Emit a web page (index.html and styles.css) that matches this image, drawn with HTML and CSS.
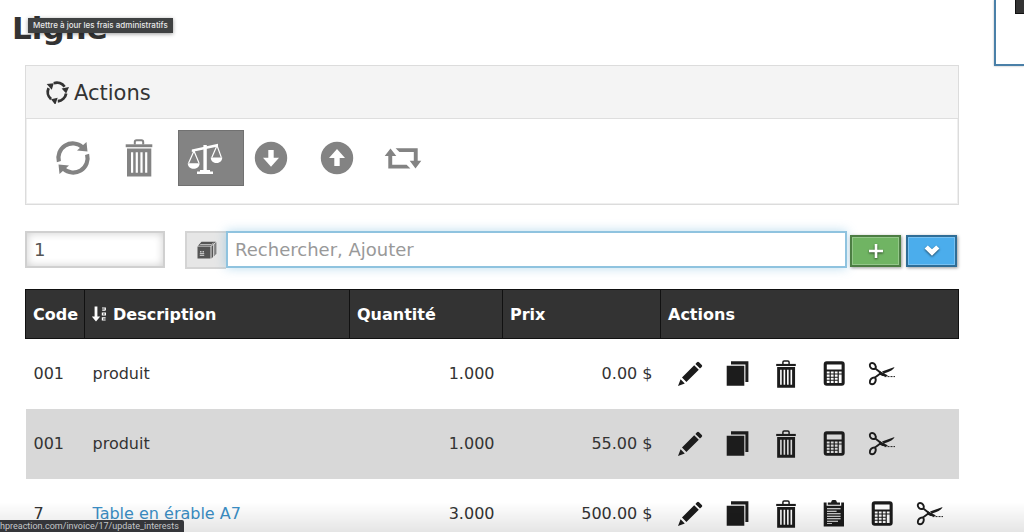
FILE: index.html
```html
<!DOCTYPE html>
<html lang="fr">
<head>
    <meta charset="UTF-8">
    <meta name="viewport" content="width=device-width, initial-scale=1.0">
    <title>Ligne</title>
    <link rel="stylesheet" href="styles.css">
</head>
<body>
    <svg class="sprite" aria-hidden="true">
        <symbol id="i-cycle" viewBox="0 0 24 24">
            <g id="cycle-part">
                <path d="M8.8 3.3A9.3 9.3 0 0 1 19.6 6.7" fill="none" stroke="currentColor" stroke-width="2.8"/>
                <path d="M16.6 8.6L24 7L21.2 13.6Z"/>
            </g>
            <use href="#cycle-part" transform="rotate(120 12 12)"/>
            <use href="#cycle-part" transform="rotate(240 12 12)"/>
        </symbol>
        <symbol id="i-refresh" viewBox="0 0 38 38">
            <g id="refresh-part">
                <path d="M4.9 22.6A14.4 14.4 0 0 1 28.5 8.2" fill="none" stroke="currentColor" stroke-width="4.2"/>
                <path d="M32.5 3L33.5 12.5L23 11.4Z"/>
            </g>
            <use href="#refresh-part" transform="rotate(180 19 19)"/>
        </symbol>
        <symbol id="i-trash" viewBox="0 0 38 38">
            <path d="M14.8 5.5V3Q14.8 1.3 16.5 1.3H21.5Q23.2 1.3 23.2 3V5.5" fill="none" stroke="currentColor" stroke-width="2"/>
            <path d="M5.7 5.3H32.3V8.2H5.7Z"/>
            <path fill-rule="evenodd" d="M7 9.6H31.3V37.6H7ZM11 13.3V33.7H13.2V13.3ZM15.7 13.3V33.7H17.9V13.3ZM20.4 13.3V33.7H22.6V13.3ZM25.1 13.3V33.7H27.3V13.3Z"/>
        </symbol>
        <symbol id="i-scale" viewBox="0 0 38 38">
            <path d="M5.8 10.6L32 4.8V7.4L5.8 13Z"/>
            <path d="M17.4 6H20.8V31H24V32.4H27V35H11V32.4H14V31H17.4Z"/>
            <path d="M8 12L2.6 24M8 12L13 24M31 6.5L25.8 18.6M31 6.5L35.4 18.6" fill="none" stroke="currentColor" stroke-width="1.2"/>
            <path d="M1.7 24.2H13.7C13.3 31.6 2.1 31.6 1.7 24.2ZM24.7 18.5H36.3C35.9 25.9 25.1 25.9 24.7 18.5Z"/>
        </symbol>
        <symbol id="i-down" viewBox="0 0 38 38">
            <path fill-rule="evenodd" d="M19 2.8A16.2 16.2 0 1 1 19 35.2A16.2 16.2 0 1 1 19 2.8ZM16.3 11V18.7H11L19 27.7L27 18.7H21.7V11Z"/>
        </symbol>
        <symbol id="i-up" viewBox="0 0 38 38">
            <path fill-rule="evenodd" d="M19 2.8A16.2 16.2 0 1 1 19 35.2A16.2 16.2 0 1 1 19 2.8ZM16.3 27V19H11L19 10L27 19H21.7V27Z"/>
        </symbol>
        <symbol id="i-repeat" viewBox="0 0 38 38">
            <path id="repeat-part" d="M.7 17L6.5 9.4L12.3 17H8.2V25.8H22.6L26.4 29.6H4.3V17Z"/>
            <use href="#repeat-part" transform="rotate(180 19 19.4)"/>
        </symbol>
        <symbol id="i-box" viewBox="0 0 20 18">
            <path fill-rule="evenodd" d="M.5 5.6H13.5V17.4H.5ZM2.8 12.3V13.2H7.2V12.3ZM2.8 14.2V15.1H7.2V14.2ZM3.2 10V11.6H4.4V10ZM5.6 10V11.6H6.8V10Z"/>
            <path d="M1 4.8L4.5 .8H19L14 4.8ZM14.5 5.4L16 4V16L14.5 17.4ZM16.8 3.4L17.6 2.7V14.6L16.8 15.4ZM18.3 2.1L19.3 1.2V13L18.3 14Z"/>
            <path d="M3.2 3.5H14.5L16.5 2" fill="none" stroke="#e6e6e6" stroke-width=".7"/>
        </symbol>
        <symbol id="i-sort" viewBox="0 0 15 16">
            <path d="M2.6 .6H5.4V10.4H8.2L4 15.4L-.2 10.4H2.6Z"/>
            <path d="M10 2H13.3V4.6M10.2 4.2H13M10.4 7H13.4V9H10.4ZM13.6 11.8H10.4V14H13.6" fill="none" stroke="currentColor" stroke-width="1.2"/>
        </symbol>
        <symbol id="i-plus" viewBox="0 0 16 16">
            <path d="M6.7 1H9.3V6.7H15V9.3H9.3V15H6.7V9.3H1V6.7H6.7Z"/>
        </symbol>
        <symbol id="i-chevron" viewBox="0 0 16 16">
            <path d="M.6 5.4L3.8 2.4L8 6.3L12.2 2.4L15.4 5.4L8 12.8Z"/>
        </symbol>
        <symbol id="i-pencil" viewBox="0 0 28 28">
            <path d="M2 26L4.6 19.2L8.8 23.4ZM6 17.6L18.2 5.2L22.8 9.8L10.4 22ZM19.4 4L21 2.3Q22 1.4 23 2.3L25.8 5.1Q26.7 6.1 25.7 7.1L24 8.6Z"/>
        </symbol>
        <symbol id="i-copy" viewBox="0 0 28 28">
            <path d="M2.7 5.7H20.3V25.7H2.7ZM7 1.3H24.4V22H21.4V4.6H7Z"/>
        </symbol>
        <symbol id="i-calc" viewBox="0 0 28 28">
            <path fill-rule="evenodd" d="M6.7 1.3H21.7Q24.7 1.3 24.7 4.3V22.7Q24.7 25.7 21.7 25.7H6.7Q3.7 25.7 3.7 22.7V4.3Q3.7 1.3 6.7 1.3ZM6.8 4.6V9.6H21.6V4.6ZM6.8 11.4V13.6H9.6V11.4ZM10.8 11.4V13.6H13.6V11.4ZM14.8 11.4V13.6H17.6V11.4ZM18.8 11.4V13.6H21.6V11.4ZM6.8 14.6V16.8H9.6V14.6ZM10.8 14.6V16.8H13.6V14.6ZM14.8 14.6V16.8H17.6V14.6ZM18.8 14.6V22.9H21.6V14.6ZM6.8 17.7V19.8H9.6V17.7ZM10.8 17.7V19.8H13.6V17.7ZM14.8 17.7V19.8H17.6V17.7ZM6.8 20.8V22.9H9.6V20.8ZM10.8 20.8V22.9H13.6V20.8ZM14.8 20.8V22.9H17.6V20.8Z"/>
        </symbol>
        <symbol id="i-cut" viewBox="0 0 28 28">
            <path d="M7.3 8.6C4 10.2 1.6 7.2 1.8 4.8C2.2 2.6 5.4 2.4 7 4.6C8 6 8 7.4 7.3 8.6ZM7 17.6C4 17.2 1.6 19.6 1.9 22.4C2.3 24.9 5.6 24.8 7 22.4C8 20.6 8 18.8 7 17.6ZM7.3 8.6L13 13L7 17.6" fill="none" stroke="currentColor" stroke-width="1.9"/>
            <path d="M10.5 10.6L20 15.6Q16.4 17.4 11.4 14.4ZM14 11.6L26.6 7Q25.4 10.8 16 13.4Z"/>
            <path d="M16.5 16.6H27" fill="none" stroke="currentColor" stroke-width="1" stroke-dasharray="2 1"/>
        </symbol>
        <symbol id="i-clipboard" viewBox="0 0 28 28">
            <path fill-rule="evenodd" d="M3.7 2.6H6.6V5.8H21.2V2.6H24V26.4H3.7ZM7 8.3V9.3H20.6V8.3ZM7 10.8V11.8H16.6V10.8ZM7 13.3V14.3H20.6V13.3ZM7 15.8V16.8H20.6V15.8ZM7 18.3V19.3H20.6V18.3ZM7 20.8V21.8H18V20.8ZM7 23.3V24.1H12V23.3Z"/>
            <path d="M7.8 4.8V2.4H11L11.8 .4Q14 -.8 16.2 .4L17 2.4H20V4.8Z"/>
        </symbol>
    </svg>

    <div class="page">
        <main class="content">
            <h1>Ligne</h1>

            <section class="panel">
                <h2 class="panel-title"><svg class="icon-title"><use href="#i-cycle"/></svg>Actions</h2>
                <div class="toolbar">
                    <button type="button" class="tool" aria-label="Actualiser"><svg><use href="#i-refresh"/></svg></button>
                    <button type="button" class="tool" aria-label="Supprimer"><svg><use href="#i-trash"/></svg></button>
                    <button type="button" class="tool active" aria-describedby="tip" aria-label="Frais administratifs"><svg><use href="#i-scale"/></svg></button>
                    <button type="button" class="tool" aria-label="Descendre"><svg><use href="#i-down"/></svg></button>
                    <button type="button" class="tool" aria-label="Monter"><svg><use href="#i-up"/></svg></button>
                    <button type="button" class="tool" aria-label="Convertir"><svg><use href="#i-repeat"/></svg></button>
                </div>
            </section>

            <form class="add-line">
                <input type="text" class="field qty" value="1" aria-label="Quantité">
                <div class="search">
                    <label class="addon" for="product" aria-label="Produit"><svg><use href="#i-box"/></svg></label>
                    <input type="text" class="field product" id="product" placeholder="Rechercher, Ajouter">
                    <button type="button" class="btn green" aria-label="Ajouter"><svg><use href="#i-plus"/></svg></button>
                    <button type="button" class="btn blue" aria-label="Options"><svg><use href="#i-chevron"/></svg></button>
                </div>
            </form>

            <table class="lines">
                <colgroup>
                    <col class="col-code">
                    <col class="col-desc">
                    <col class="col-qty">
                    <col class="col-price">
                    <col>
                </colgroup>
                <thead>
                    <tr>
                        <th>Code</th>
                        <th><svg class="icon-sort"><use href="#i-sort"/></svg>Description</th>
                        <th>Quantité</th>
                        <th>Prix</th>
                        <th>Actions</th>
                    </tr>
                </thead>
                <tbody>
                    <tr>
                        <td>001</td>
                        <td>produit</td>
                        <td class="num">1.000</td>
                        <td class="num">0.00 $</td>
                        <td>
                            <div class="row-actions">
                                <a href="#" aria-label="Modifier"><svg><use href="#i-pencil"/></svg></a>
                                <a href="#" aria-label="Copier"><svg><use href="#i-copy"/></svg></a>
                                <a href="#" aria-label="Supprimer"><svg><use href="#i-trash"/></svg></a>
                                <a href="#" aria-label="Calculer"><svg><use href="#i-calc"/></svg></a>
                                <a href="#" aria-label="Couper"><svg><use href="#i-cut"/></svg></a>
                            </div>
                        </td>
                    </tr>
                    <tr>
                        <td>001</td>
                        <td>produit</td>
                        <td class="num">1.000</td>
                        <td class="num">55.00 $</td>
                        <td>
                            <div class="row-actions">
                                <a href="#" aria-label="Modifier"><svg><use href="#i-pencil"/></svg></a>
                                <a href="#" aria-label="Copier"><svg><use href="#i-copy"/></svg></a>
                                <a href="#" aria-label="Supprimer"><svg><use href="#i-trash"/></svg></a>
                                <a href="#" aria-label="Calculer"><svg><use href="#i-calc"/></svg></a>
                                <a href="#" aria-label="Couper"><svg><use href="#i-cut"/></svg></a>
                            </div>
                        </td>
                    </tr>
                    <tr>
                        <td>7</td>
                        <td><a class="link" href="#">Table en érable A7</a></td>
                        <td class="num">3.000</td>
                        <td class="num">500.00 $</td>
                        <td>
                            <div class="row-actions">
                                <a href="#" aria-label="Modifier"><svg><use href="#i-pencil"/></svg></a>
                                <a href="#" aria-label="Copier"><svg><use href="#i-copy"/></svg></a>
                                <a href="#" aria-label="Supprimer"><svg><use href="#i-trash"/></svg></a>
                                <a href="#" aria-label="Détails"><svg><use href="#i-clipboard"/></svg></a>
                                <a href="#" aria-label="Calculer"><svg><use href="#i-calc"/></svg></a>
                                <a href="#" aria-label="Couper"><svg><use href="#i-cut"/></svg></a>
                            </div>
                        </td>
                    </tr>
                </tbody>
            </table>
        </main>

        <aside class="side">
            <div class="side-bar"></div>
        </aside>
    </div>

    <div class="fade"></div>
    <div class="tooltip" id="tip" role="tooltip">Mettre à jour les frais administratifs</div>
    <div class="status">hpreaction.com/invoice/17/update_interests</div>
</body>
</html>
```
FILE: styles.css
```css
* {
    box-sizing: border-box;
}
body {
    margin: 0;
    height: 100vh;
    overflow: hidden;
    background-color: #fff;
    color: #333;
    font-family: "DejaVu Sans", Verdana, sans-serif;
    font-size: 16px;
}
svg {
    display: block;
    fill: currentColor;
}
.sprite {
    position: absolute;
    width: 0;
    height: 0;
}
.page {
    display: flex;
    align-items: flex-start;
}
.content {
    flex: 1;
    min-width: 0;
    padding: 8px 0 0 25px;
}
h1 {
    margin: 0 0 17px -13px;
    font-size: 31px;
    line-height: 40px;
    color: #333;
}

/* Actions */
.panel {
    border: 1px solid #dcdcdc;
    margin-bottom: 26px;
    box-shadow: inset 0 0 0 1px #efefef;
}
.panel-title {
    display: flex;
    align-items: center;
    gap: 5px;
    height: 53px;
    margin: 0;
    padding: 2px 19px 0;
    background-color: #f4f4f4;
    border-bottom: 1px solid #dedede;
    font-size: 21px;
    font-weight: normal;
}
.icon-title {
    width: 24px;
    height: 24px;
    margin-top: -2px;
}
.toolbar {
    display: flex;
    padding: 11px 20px 18px;
}
.tool {
    width: 66px;
    height: 56px;
    padding: 0 0 0 7px;
    border: 1px solid transparent;
    background: none;
    color: #838383;
    cursor: pointer;
}
.tool svg {
    width: 38px;
    height: 38px;
}
.tool.active {
    background-color: #838383;
    border-color: #717171;
    color: #fff;
}

/* Nouvelle ligne */
.add-line {
    display: flex;
    gap: 20px;
    margin-bottom: 20px;
}
.field {
    height: 37px;
    padding: 0 7px;
    border: 2px solid #d0d0d0;
    background-color: #fff;
    color: #555;
    font-family: inherit;
    font-size: 18px;
    outline: none;
}
.field::placeholder {
    color: #999;
    opacity: 1;
}
.qty {
    width: 15%;
    box-shadow: inset 0 0 8px rgba(0,0,0,0.2);
}
.search {
    display: flex;
    flex: 1;
    align-items: flex-start;
    min-width: 0;
}
.addon {
    display: flex;
    align-items: center;
    justify-content: center;
    width: 41px;
    height: 38px;
    border: 2px solid #d4d4d4;
    border-right: 0;
    background-color: #e6e6e6;
    color: #555;
}
.addon svg {
    width: 20px;
    height: 18px;
}
.product {
    flex: 1;
    min-width: 0;
    border-color: #8fc3df;
    box-shadow: 0 0 10px rgba(82,168,215,0.4);
}
.btn {
    display: flex;
    align-items: center;
    justify-content: center;
    width: 51px;
    height: 32px;
    margin: 4px 2px 0 3px;
    padding: 0;
    border: 2px solid;
    color: #fff;
    box-shadow: 1px 1px 3px rgba(0,0,0,0.4), inset 0 0 0 1px rgba(255,255,255,0.25);
    cursor: pointer;
}
.btn svg {
    width: 16px;
    height: 16px;
    filter: drop-shadow(0 1px 1px rgba(0,0,0,0.6));
}
.green {
    background-color: #70b463;
    border-color: #4c7d43;
}
.blue {
    background-color: #4badec;
    border-color: #2f6d96;
}

/* Lignes */
.lines {
    width: 100%;
    table-layout: fixed;
    border-collapse: collapse;
}
.col-code {
    width: 59px;
}
.col-desc {
    width: 265px;
}
.col-qty {
    width: 153px;
}
.col-price {
    width: 158px;
}
th {
    height: 49px;
    padding: 0 7px;
    border: 1px solid #111;
    background-color: #333;
    color: #fff;
    text-align: left;
    white-space: nowrap;
}
.icon-sort {
    display: inline-block;
    width: 15px;
    height: 16px;
    margin-right: 6px;
    vertical-align: -2px;
}
td {
    height: 70px;
    padding: 0 8px;
}
tbody tr:nth-child(even) {
    background-color: #d8d8d8;
}
.num {
    text-align: right;
}
.link {
    color: #3b8fc6;
    text-decoration: none;
}
.row-actions {
    display: flex;
    gap: 20px;
    padding: 0 7px;
}
.row-actions a {
    color: #1c1c1c;
}
.row-actions svg {
    width: 28px;
    height: 28px;
}

.side {
    width: 30px;
    height: 66px;
    margin-left: 35px;
    padding-left: 19px;
    border-left: 2px solid #4a80a8;
    border-bottom: 2px solid #4a80a8;
    box-shadow: 0 0 2px rgba(0,0,0,0.3);
}
.side-bar {
    height: 14px;
    background-color: #333;
    border: 1px solid #111;
    border-width: 0 0 1px 1px;
}

.fade {
    position: fixed;
    left: 0;
    right: 0;
    bottom: 0;
    height: 30px;
    background: linear-gradient(rgba(0,0,0,0), rgba(0,0,0,0.1));
    pointer-events: none;
}
.tooltip {
    position: absolute;
    left: 28px;
    top: 18px;
    padding: 0 5px;
    background-color: #3f4142;
    color: #e8e8e8;
    font-family: Inter, sans-serif;
    font-size: 8px;
    font-weight: 500;
    line-height: 15px;
    box-shadow: 0 1px 4px rgba(0,0,0,0.4);
}
.status {
    position: fixed;
    left: 0;
    bottom: 0;
    padding: 0 5px 0 0;
    background-color: #35363a;
    border-radius: 0 2px 0 0;
    color: #c4c6ca;
    font-family: Roboto, sans-serif;
    font-size: 9px;
    line-height: 12px;
}
```
